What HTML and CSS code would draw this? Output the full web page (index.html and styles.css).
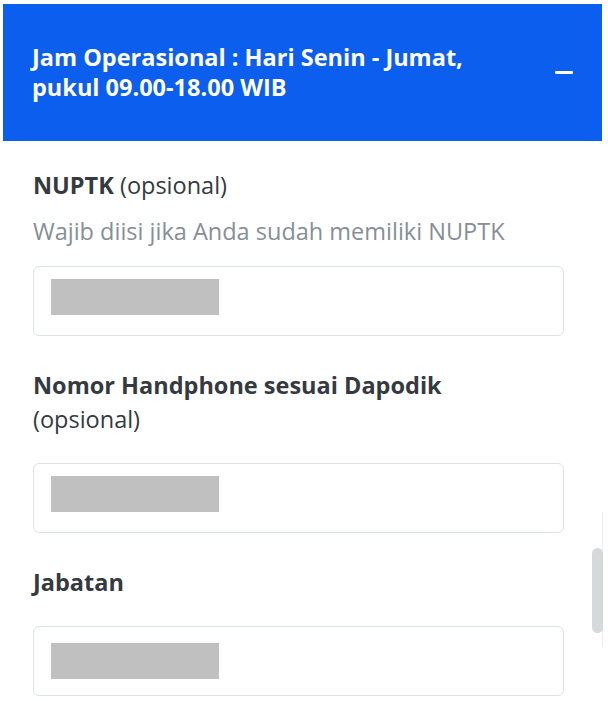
FILE: index.html
```html
<!DOCTYPE html>
<html lang="id">
<head>
<meta charset="utf-8">
<title>Form</title>
<link rel="stylesheet" href="styles.css">
</head>
<body>
<div class="page">
  <div class="header">
    <div class="header-text">Jam Operasional : Hari Senin - Jumat,<br>pukul 09.00-18.00 WIB</div>
    <span class="minus" aria-label="collapse"></span>
  </div>
  <div class="content">
    <div class="field">
      <div class="label with-help"><b>NUPTK</b> (opsional)</div>
      <div class="help">Wajib diisi jika Anda sudah memiliki NUPTK</div>
      <div class="input"><span class="mask"></span></div>
    </div>
    <div class="field">
      <div class="label"><b>Nomor Handphone sesuai Dapodik</b><br>(opsional)</div>
      <div class="input"><span class="mask"></span></div>
    </div>
    <div class="field">
      <div class="label"><b>Jabatan</b></div>
      <div class="input centered"><span class="mask"></span></div>
    </div>
  </div>
  <div class="scroll-track"></div>
  <div class="scroll-thumb"></div>
</div>
</body>
</html>
```

FILE: styles.css
```css
html, body {
  margin: 0;
  padding: 0;
  background: #ffffff;
}
body {
  font-family: "Open Sans", "Noto Sans", sans-serif;
  color: #343a40;
}
.page {
  position: relative;
  width: 608px;
  height: 701px;
  overflow: hidden;
}
.header {
  margin: 4px 6px 0 3px;
  height: 137px;
  background: #0c5eee;
  color: #ffffff;
  display: flex;
  align-items: center;
  justify-content: space-between;
  padding: 0 29px 1px 29px;
  box-sizing: border-box;
}
.header-text {
  font-weight: 700;
  font-size: 23.5px;
  line-height: 30px;
}
.minus {
  display: block;
  width: 18px;
  height: 3px;
  margin-top: 1px;
  background: #ffffff;
  border-radius: 1px;
}
.content {
  padding: 27px 0 0 33px;
  width: 531px;
}
.field + .field {
  margin-top: 32px;
}
.label {
  font-size: 23.5px;
  line-height: 34px;
  margin-bottom: 27px;
  color: #343a40;
}
.label b {
  font-weight: 700;
}
.label.with-help {
  margin-bottom: 13px;
}
.help {
  font-size: 23.5px;
  line-height: 33px;
  color: #868e96;
  margin-bottom: 18px;
}
.input {
  height: 70px;
  box-sizing: border-box;
  border: 1px solid #dee2e6;
  border-radius: 6px;
  padding: 12px 17px;
}
.input.centered {
  padding-top: 16px;
}
.mask {
  display: block;
  width: 168px;
  height: 36px;
  background: #c0c0c0;
}
.scroll-track {
  position: absolute;
  left: 602px;
  top: 512px;
  width: 1px;
  height: 135px;
  background: #eceef0;
}
.scroll-thumb {
  position: absolute;
  left: 592px;
  top: 548px;
  width: 11px;
  height: 85px;
  border-radius: 6px;
  background: #d6d9dc;
}
```
